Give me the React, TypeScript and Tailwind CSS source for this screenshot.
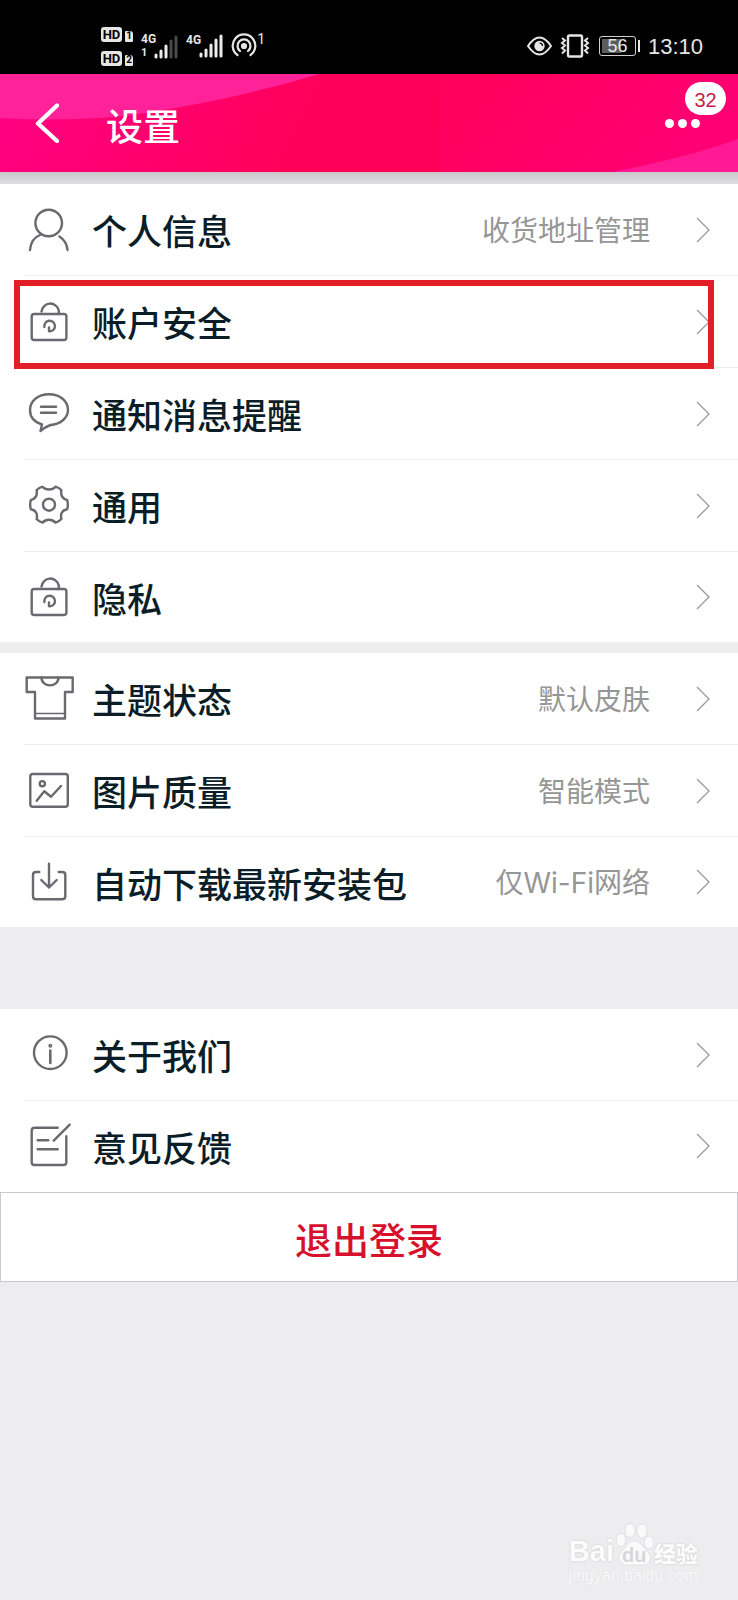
import type { ReactNode } from 'react';

interface SettingItem {
  label: string;
  value?: string;
  icon: ReactNode;
  highlighted?: boolean;
}

const LockIcon = (
  <>
    <rect x="7.7" y="16" width="34.7" height="26" rx="2.5" />
    <path d="M17.500 13.500A8.800 9 0 0 1 34.800 12.500V16" />
    <path d="M20.300 29C20 20.500 31 21 31 28.300C31 31.500 28 33.500 25 33.300V29.500" />
  </>
);

const accountItems: SettingItem[] = [
  {
    label: '个人信息',
    value: '收货地址管理',
    icon: (
      <>
        <circle cx="24.700" cy="17" r="13.300" />
        <path d="M17 28.500C10.500 31 6.500 37 6 44M35.500 30.500C40 33.500 43 38 43.500 44" />
      </>
    ),
  },
  { label: '账户安全', icon: LockIcon, highlighted: true },
  {
    label: '通知消息提醒',
    icon: (
      <>
        <path d="M16.500 41L18 34.500C10 32 6 26.500 6 20C6 11 14 4.300 25 4.300S44 11 44 20C44 28.500 35.500 34.500 26.500 35C23 36.200 20 38 16.500 41Z" />
        <path d="M17 16.700H32M17 22.700H32" />
      </>
    ),
  },
  {
    label: '通用',
    icon: (
      <>
        <path d="M18.500 4.700C16.500 5.300 14 6.500 12.600 8.200C13.500 13 12.500 16.500 6.800 18.200C6 21 6 24.500 6.800 27.200C12 28 13.800 32 12.600 37C14 38.500 16.500 40 18.500 40.600C22 36.700 28 36.700 31.500 40.600C33.500 40 36 38.500 37.400 37C36.200 32 38 28 43.200 27.200C44 24.500 44 21 43.200 18.200C37.500 16.500 36.500 13 37.400 8.200C36 6.500 33.500 5.300 31.500 4.700C28 8.500 22 8.500 18.500 4.700Z" />
        <circle cx="25" cy="22.700" r="6" />
      </>
    ),
  },
  { label: '隐私', icon: LockIcon },
];

const displayItems: SettingItem[] = [
  {
    label: '主题状态',
    value: '默认皮肤',
    icon: (
      <>
        <path d="M2.700 2.500H48.700V17H41V43.500H11V17H2.700Z" />
        <path d="M17.500 2.500C17.500 13 34.500 13 34.500 2.500" />
        <path d="M11 38.500H41" strokeWidth="1.400" />
      </>
    ),
  },
  {
    label: '图片质量',
    value: '智能模式',
    icon: (
      <>
        <rect x="6.300" y="7" width="37.500" height="32.700" rx="2.500" />
        <circle cx="18.300" cy="16.700" r="2.600" />
        <path d="M12.700 33.700L20.300 24.300L27 29.700L37 19" />
      </>
    ),
  },
  {
    label: '自动下载最新安装包',
    value: '仅Wi-Fi网络',
    icon: (
      <>
        <path d="M15.300 14H12Q9 14 9 17V38.300Q9 41.300 12 41.300H38.300Q41.300 41.300 41.300 38.300V17Q41.300 14 38.300 14H34.700" />
        <path d="M25 5.700V29.500M17.300 22L25 29.500L32.700 22" />
      </>
    ),
  },
];

const aboutItems: SettingItem[] = [
  {
    label: '关于我们',
    icon: (
      <>
        <circle cx="26.300" cy="21.700" r="16.300" />
        <path d="M26.300 19.500V32" strokeWidth="2.600" />
        <circle cx="26.300" cy="14.700" r="0.800" />
      </>
    ),
  },
  {
    label: '意见反馈',
    icon: (
      <>
        <path d="M33.700 5.700H10.500Q7.700 5.700 7.700 8.500V40.200Q7.700 43 10.500 43H39.500Q42.300 43 42.300 40.200V14.300" />
        <path d="M45.700 2.700L29.700 18.700M13.700 18.300H24.300M13.700 27.300H33.700" />
      </>
    ),
  },
];

function SettingRow({ item }: { item: SettingItem }) {
  return (
    <li className="relative ml-6 h-[92px] border-b border-[#ececee] last:h-[90px] last:border-b-0">
      <a href="#" className="flex h-full items-center pr-7">
        <svg
          className="h-12 w-12 shrink-0"
          viewBox="0 0 48 48"
          overflow="visible"
          fill="none"
          stroke="#69696f"
          strokeWidth="2.400"
          strokeLinecap="round"
          strokeLinejoin="round"
        >
          {item.icon}
        </svg>
        <span className="ml-5 flex-1 text-[35px] leading-none font-medium text-[#0b1e28]">{item.label}</span>
        {item.value && (
          <span className="pt-0.5 font-['Inter','Noto_Sans_CJK_SC',sans-serif] text-[28px] leading-none text-[#969696]">
            {item.value}
          </span>
        )}
        <svg className="ml-[46px] h-[26px] w-[14px] shrink-0" viewBox="0 0 14 26" fill="none" stroke="#999" strokeWidth="1.300">
          <path d="M1 1L13 13L1 25" />
        </svg>
      </a>
      {item.highlighted && (
        <div className="pointer-events-none absolute top-1 right-6 -bottom-0.5 -left-2.5 border-[6px] border-[#e21f26]" />
      )}
    </li>
  );
}

function SettingGroup({ items }: { items: SettingItem[] }) {
  return (
    <ul className="bg-white">
      {items.map((item) => (
        <SettingRow key={item.label} item={item} />
      ))}
    </ul>
  );
}

function HdBadge({ sim }: { sim: string }) {
  return (
    <div className="flex items-end gap-[3px]">
      <span className="flex h-[15px] w-[21px] items-center justify-center rounded-[3px] bg-[#e6e6e6] text-[13px] leading-none font-bold text-black">
        HD
      </span>
      <span className="flex h-[11px] w-2 items-center justify-center rounded-[1px] rounded-tr-[3px] bg-[#e6e6e6] text-[10px] leading-none font-bold text-black">
        {sim}
      </span>
    </div>
  );
}

function SignalBars({ strength }: { strength: number }) {
  const bars = [4, 8, 13, 18, 22];
  return (
    <svg className="h-6 w-6" viewBox="0 0 24 24" strokeWidth="3" strokeLinecap="round">
      {bars.map((height, index) => (
        <path
          key={height}
          d={`M${2 + index * 5} 22V${24 - height}`}
          stroke={index < strength ? '#ececec' : '#4a4a4a'}
        />
      ))}
    </svg>
  );
}

function StatusBar() {
  return (
    <div className="flex h-[74px] items-center justify-between bg-black pt-[18px] pr-[35px] pl-[101px] font-['Roboto','Liberation_Sans',sans-serif] text-[#e6e6e6]">
      <div className="flex items-center">
        <div className="flex flex-col gap-[9px]">
          <HdBadge sim="1" />
          <HdBadge sim="2" />
        </div>
        <div className="ml-2 flex items-end">
          <div className="flex flex-col text-[12px] leading-[13px] font-bold">
            <span>4G</span>
            <span className="text-[11px]">1</span>
          </div>
          <div className="-ml-0.5">
            <SignalBars strength={3} />
          </div>
        </div>
        <div className="ml-2 flex items-end">
          <span className="self-start text-[12px] leading-[13px] font-bold">4G</span>
          <div className="-ml-0.5">
            <SignalBars strength={5} />
          </div>
        </div>
        <svg className="ml-2 h-[26px] w-[26px]" viewBox="0 0 26 26" fill="none" stroke="#e6e6e6" strokeWidth="2.200" strokeLinecap="round">
          <circle cx="13" cy="13" r="2" fill="#e6e6e6" />
          <path d="M9 18A6.500 6.500 0 1 1 17 18" />
          <path d="M6.500 22A11.300 11.300 0 1 1 19.500 22" />
        </svg>
        <span className="self-start pt-1 text-[14px] leading-4">1</span>
      </div>
      <div className="flex items-center">
        <svg className="h-5 w-[25px]" viewBox="0 0 25 20" fill="none" stroke="#e6e6e6" strokeWidth="2">
          <path d="M1 10Q12.500 -7 24 10Q12.500 27 1 10Z" strokeLinejoin="round" />
          <circle cx="12.500" cy="10" r="5.200" fill="#e6e6e6" stroke="none" />
          <path d="M12.500 7Q15.500 7.200 15.500 10" stroke="#000" strokeWidth="1.200" />
        </svg>
        <svg className="ml-2 h-6 w-[30px]" viewBox="0 0 30 24" fill="none" stroke="#e6e6e6" strokeWidth="2">
          <rect x="8" y="1.500" width="14" height="21" rx="1.500" strokeWidth="2.400" />
          <path d="M2 4L5 6.500L2 9L5 11.500L2 14L5 16.500L2 19.500M28 4L25 6.500L28 9L25 11.500L28 14L25 16.500L28 19.500" />
        </svg>
        <div className="ml-[9px] flex items-center gap-0.5">
          <div className="h-5 w-[37px] rounded-[3px] border border-[#cfcfcf] p-0.5">
            <div className="flex h-full items-center justify-center bg-linear-to-r from-[#5c5c5c] from-60% to-transparent to-60% font-['Liberation_Sans',sans-serif] text-[18px] leading-none">
              56
            </div>
          </div>
          <span className="h-3 w-0.5 bg-[#e6e6e6]" />
        </div>
        <time className="ml-2 pt-0.5 font-['Liberation_Sans',sans-serif] text-[22px] leading-none">13:10</time>
      </div>
    </div>
  );
}

function TitleBar() {
  return (
    <header className="relative flex h-[98px] items-center overflow-hidden bg-[#ff0059] pl-[35px] text-white">
      <svg className="absolute inset-0 h-full w-full" viewBox="0 0 738 98" preserveAspectRatio="none">
        <defs>
          <linearGradient id="glow-left" x1="0" y1="0" x2="1" y2="0.150">
            <stop offset="0" stopColor="#ff0084" />
            <stop offset="0.500" stopColor="#ff0070" />
            <stop offset="1" stopColor="#ff0059" />
          </linearGradient>
          <linearGradient id="glow-right" x1="0" y1="0" x2="1" y2="0.300">
            <stop offset="0" stopColor="#ff0059" />
            <stop offset="1" stopColor="#ff0074" />
          </linearGradient>
        </defs>
        <path d="M0 0H320V98H0Z" fill="url(#glow-left)" />
        <path d="M440 0H738V98H440Z" fill="url(#glow-right)" />
        <path d="M0 44Q60 48 125 42Q225 28 320 0H0Z" fill="#ff2299" />
        <path d="M612 98Q685 84 738 65V98Z" fill="#ff1a94" />
      </svg>
      <button type="button" aria-label="返回" className="relative">
        <svg className="h-10 w-6" viewBox="0 0 24 40" fill="none" stroke="currentColor" strokeWidth="4.400" strokeLinecap="round" strokeLinejoin="round">
          <path d="M22 2.500L3 20.500L22 38" />
        </svg>
      </button>
      <h1 className="relative ml-[47px] flex-1 pt-1 text-[37px] leading-none font-medium">设置</h1>
      <button type="button" aria-label="更多" className="relative h-full w-[76px]">
        <span className="absolute bottom-11 left-[3px] flex gap-1">
          <i className="h-[9px] w-[9px] rounded-full bg-white" />
          <i className="h-[9px] w-[9px] rounded-full bg-white" />
          <i className="h-[9px] w-[9px] rounded-full bg-white" />
        </span>
        <span className="absolute top-2 right-3 flex h-[33px] w-[41px] items-center justify-center rounded-full bg-white pt-0.5 font-['Liberation_Sans',sans-serif] text-[20px] leading-none text-[#c41f4a]">
          32
        </span>
      </button>
    </header>
  );
}

function Watermark() {
  return (
    <div className="absolute right-10 bottom-3.5 text-[#fcfcfc] [text-shadow:0_0_2px_#c0c0c4]">
      <div className="flex items-end">
        <span className="font-['Liberation_Sans',sans-serif] text-[29px] leading-[30px] font-bold">Bai</span>
        <div className="relative h-[44px] w-[40px]">
          <svg className="h-full w-full" viewBox="0 0 40 44" fill="#fafafa" stroke="#dcdcdf" strokeWidth="0.800">
            <ellipse cx="7" cy="18" rx="4.800" ry="6.500" />
            <ellipse cx="16" cy="8.500" rx="5" ry="7" />
            <ellipse cx="28" cy="9" rx="5" ry="7" />
            <ellipse cx="35" cy="20.500" rx="4.800" ry="6.500" />
            <path d="M20 19C14 19 14 24 8 29C2 34 5 43 13 43H29C37 43 39 34 33 29C27 24 27 19 20 19Z" />
          </svg>
          <span className="absolute bottom-0 left-2 font-['Liberation_Sans',sans-serif] text-[20px] leading-[22px] font-bold text-[#d6d6da] [text-shadow:none]">
            du
          </span>
        </div>
        <span className="text-[22px] leading-[28px] font-black">经验</span>
      </div>
      <div className="font-['Liberation_Sans',sans-serif] text-[16px] leading-5 [text-shadow:0_0_1px_#d0d0d4]">
        jingyan.baidu.com
      </div>
    </div>
  );
}

export default function App() {
  return (
    <div className="relative min-h-screen bg-[#ededef] font-['Noto_Sans_CJK_SC',sans-serif]">
      <StatusBar />
      <TitleBar />
      <div className="h-3 bg-linear-to-b from-[#c8c8cb] to-[#dfdfe2]" />
      <main>
        <SettingGroup items={accountItems} />
        <div className="mt-[11px]">
          <SettingGroup items={displayItems} />
        </div>
        <div className="mt-[82px] bg-white pb-px">
          <SettingGroup items={aboutItems} />
        </div>
        <button
          type="button"
          className="flex h-[90px] w-full items-center justify-center border border-[#c9c9cb] bg-white pt-1 text-[37px] leading-none font-medium text-[#d9102c]"
        >
          退出登录
        </button>
      </main>
      <Watermark />
    </div>
  );
}
